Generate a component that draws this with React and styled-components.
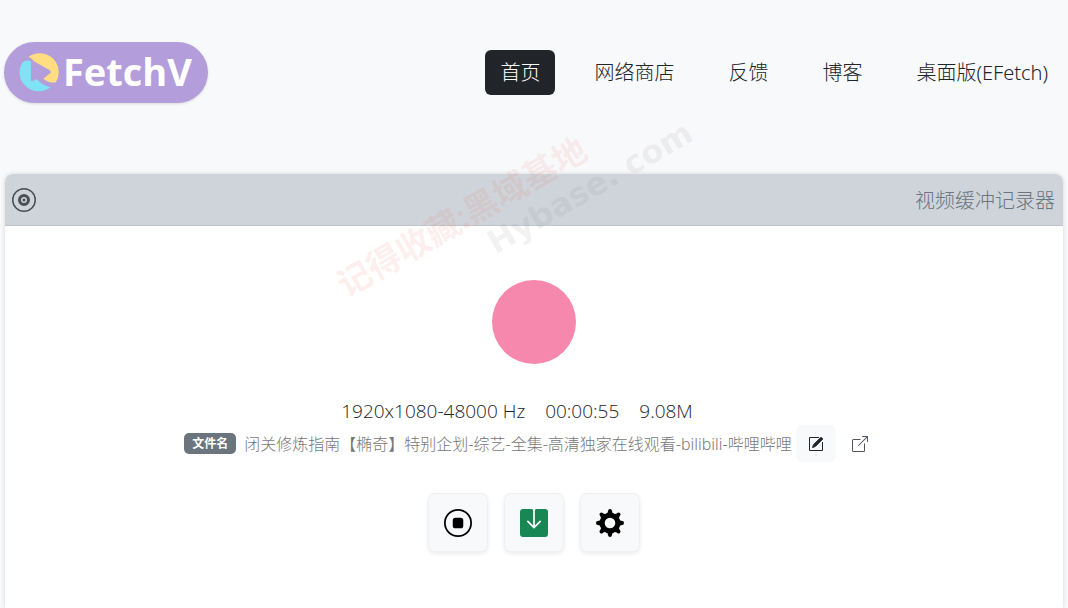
import React from 'react'
import styled, { createGlobalStyle } from 'styled-components'
import { BsVinyl, BsStopCircle, BsBoxArrowUpRight } from 'react-icons/bs'

const dark = '#212529';
const light = '#f8f9fa';
const page = '#f8f9fb';
const grey = '#6c757d';
const green = '#198754';

const GlobalStyle = createGlobalStyle`
    * {
        box-sizing : border-box;
    }

    body {
        margin : 0;
        background : ${page};
        color : ${dark};
        font-family : "Open Sans", "Noto Sans CJK SC", sans-serif;
        overflow-x : hidden;
    }
`

const Page = styled.div`
    position : relative;
    display : flex;
    flex-direction : column;
    min-height : 100vh;
    padding : 0 5px;
`

const Header = styled.header`
    display : flex;
    align-items : center;
    justify-content : space-between;
    padding : 42px 0 71px;
    margin : 0 0 0 -1px;
`

const Logo = styled.a`
    display : flex;
    align-items : center;
    gap : 3px;
    padding : 0 16px 3px 14px;
    border-radius : 31px;
    background : #b39ddb;
    box-shadow : 0 1px 3px rgba(0, 0, 0, 0.12);
    color : white;
    font-size : 38px;
    font-weight : 700;
    line-height : 58px;
    text-decoration : none;
`

const Nav = styled.nav`
    display : flex;
    gap : 24px;
`

const NavLink = styled.a`
    padding : 0 15px;
    border-radius : 6px;
    background : ${({$active}) => $active ? dark : 'transparent'};
    color : ${({$active}) => $active ? 'white' : dark};
    font-family : "Noto Sans", "Noto Sans CJK SC", sans-serif;
    font-size : 20px;
    font-weight : 300;
    line-height : 45px;
    text-decoration : none;
    white-space : nowrap;
`

const Card = styled.main`
    flex : 1;
    display : flex;
    flex-direction : column;
    border-radius : 8px 8px 0 0;
    background : white;
    box-shadow : 0 0 4px rgba(0, 0, 0, 0.15);
`

const CardHeader = styled.div`
    display : flex;
    align-items : center;
    justify-content : space-between;
    height : 52px;
    padding : 0 8px 0 7px;
    border-bottom : 1px solid #c0c5cb;
    border-radius : 8px 8px 0 0;
    background : #ced4da;
    color : #495057;
`

const Title = styled.h1`
    margin : 0;
    color : ${grey};
    font-size : 20px;
    font-weight : 300;
`

const CardBody = styled.div`
    display : flex;
    flex-direction : column;
    align-items : center;
    padding-top : 54px;
`

const Pulse = styled.div`
    width : 84px;
    height : 84px;
    border-radius : 50%;
    background : #f688ae;
`

const Stats = styled.div`
    display : flex;
    gap : 20px;
    margin : 33px 34px 0 0;
    font-size : 19px;
    font-weight : 300;
    line-height : 28px;
`

const FileRow = styled.div`
    display : flex;
    align-items : center;
    margin-right : 4px;
`

const Badge = styled.span`
    padding : 0 8px;
    margin-right : 8px;
    border-radius : 5px;
    background : ${grey};
    color : white;
    font-size : 12px;
    font-weight : 700;
    line-height : 21px;
`

const FileName = styled.span`
    color : #777;
    font-family : "Noto Sans", "Noto Sans CJK SC", sans-serif;
    font-size : 16px;
    font-weight : 300;
    line-height : 22px;
    white-space : nowrap;
`

const SmallButton = styled.button`
    display : flex;
    align-items : center;
    justify-content : center;
    width : 40px;
    height : 37px;
    margin-left : 4px;
    padding : 0;
    border : none;
    border-radius : 6px;
    background : ${({$filled}) => $filled ? light : 'transparent'};
    color : ${({$filled}) => $filled ? dark : '#50565b'};
    cursor : pointer;
`

const Actions = styled.div`
    display : flex;
    gap : 16px;
    margin-top : 31px;
`

const ActionButton = styled.button`
    display : flex;
    align-items : center;
    justify-content : center;
    width : 60px;
    height : 59px;
    padding : 0;
    border : 1px solid #eff0f2;
    border-radius : 7px;
    background : ${light};
    box-shadow : 0 2px 4px rgba(0, 0, 0, 0.08);
    color : black;
    cursor : pointer;
`

const Watermark = styled.div`
    position : absolute;
    top : 168px;
    left : 323px;
    display : flex;
    flex-direction : column;
    align-items : flex-end;
    transform : rotate(-30deg);
    pointer-events : none;
    white-space : nowrap;
`

const WatermarkTitle = styled.span`
    margin-right : 100px;
    color : rgba(240, 90, 70, 0.1);
    font-size : 34px;
    font-weight : 700;
    line-height : 42px;
`

const WatermarkSite = styled.span`
    color : rgba(120, 120, 120, 0.1);
    font-family : "DejaVu Sans", sans-serif;
    font-size : 32px;
    font-weight : 700;
    line-height : 36px;
`

const LogoIcon = () => (
    <svg width="42" height="42" viewBox="-1 -3 44 44" aria-hidden="true">
        <path d="M10 4 A20 20 0 0 1 38.5 31 Q32 32 25.5 27 L32 22 Q34.5 20 32 18 L16 9 Q14 5.5 10 4 Z" fill="#ffdd80"/>
        <path d="M3.5 10 Q7 7 12.5 8.5 V28 Q12.5 31 15.5 29 L18.5 27.5 Q24 34 33 36 A20 20 0 0 1 3.5 10 Z" fill="#80e2f5"/>
    </svg>
)

const SaveIcon = () => (
    <svg width="28" height="28" viewBox="0 0 28 28" aria-hidden="true">
        <rect width="28" height="28" rx="3" fill={green}/>
        <path d="M12 0 Q13.2 0.3 13.2 2 H14.8 Q14.8 0.3 16 0 Z" fill="white"/>
        <path d="M14 1 V18 M7.8 12.4 L14 18.6 L20.2 12.4" fill="none" stroke="white" strokeWidth="1.7" strokeLinecap="round" strokeLinejoin="round"/>
    </svg>
)

const teeth = [0, 45, 90, 135, 180, 225, 270, 315];

const GearIcon = () => (
    <svg width="28" height="28" viewBox="-14 -14 28 28" aria-hidden="true">
        <circle r="7.8" fill="none" stroke="currentColor" strokeWidth="5"/>
        {teeth.map(angle => (
            <path key={angle} transform={`rotate(${angle})`} d="M-4 -9 Q-2 -10 -1.9 -12.2 A1.9 1.8 0 0 1 1.9 -12.2 Q2 -10 4 -9 Z" fill="currentColor"/>
        ))}
    </svg>
)

const EditIcon = () => (
    <svg width="16" height="16" viewBox="0 0 16 16" fill="none" stroke="currentColor" aria-hidden="true">
        <path d="M11 1.5 H1.5 V14.5 H14.5 V6"/>
        <path d="M4.5 11.5 L5.5 8.7 L13 1.2 L14.8 3 L7.3 10.5 Z" fill="currentColor" strokeLinejoin="round"/>
    </svg>
)

const links = ['首页', '网络商店', '反馈', '博客', '桌面版(EFetch)'];

const App = () => {
    return (
        <>
            <GlobalStyle/>
            <Page>
                <Header>
                    <Logo href="#">
                        <LogoIcon/>
                        FetchV
                    </Logo>
                    <Nav>
                        {links.map((link, i) => (
                            <NavLink key={link} href="#" $active={i === 0}>{link}</NavLink>
                        ))}
                    </Nav>
                </Header>

                <Card>
                    <CardHeader>
                        <BsVinyl size={24}/>
                        <Title>视频缓冲记录器</Title>
                    </CardHeader>

                    <CardBody>
                        <Pulse/>
                        <Stats>
                            <span>1920x1080-48000 Hz</span>
                            <span>00:00:55</span>
                            <span>9.08M</span>
                        </Stats>
                        <FileRow>
                            <Badge>文件名</Badge>
                            <FileName>闭关修炼指南【椭奇】特别企划-综艺-全集-高清独家在线观看-bilibili-哔哩哔哩</FileName>
                            <SmallButton $filled aria-label="编辑"><EditIcon/></SmallButton>
                            <SmallButton aria-label="打开"><BsBoxArrowUpRight size={16}/></SmallButton>
                        </FileRow>
                        <Actions>
                            <ActionButton aria-label="停止"><BsStopCircle size={28}/></ActionButton>
                            <ActionButton aria-label="保存"><SaveIcon/></ActionButton>
                            <ActionButton aria-label="设置"><GearIcon/></ActionButton>
                        </Actions>
                    </CardBody>
                </Card>

                <Watermark>
                    <WatermarkTitle>记得收藏:黑域基地</WatermarkTitle>
                    <WatermarkSite>Hybase. com</WatermarkSite>
                </Watermark>
            </Page>
        </>
    )
}

export default App
